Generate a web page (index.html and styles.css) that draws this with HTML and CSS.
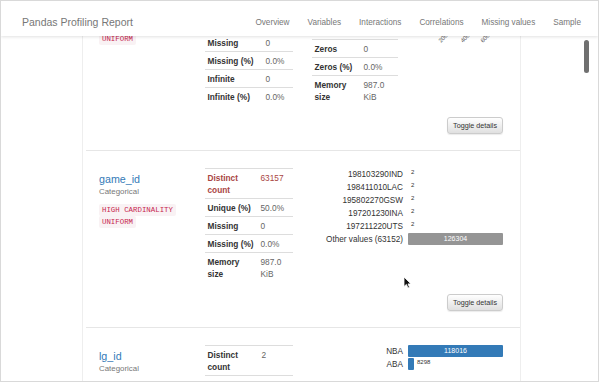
FILE: index.html
```html
<!DOCTYPE html>
<html lang="en">
<head>
    <meta charset="UTF-8">
    <title>Pandas Profiling Report</title>
    <link rel="stylesheet" href="styles.css">
</head>
<body>
<div class="frame">
    <div class="navbar">
        <span class="brand">Pandas Profiling Report</span>
        <ul class="menu">
            <li>Overview</li>
            <li>Variables</li>
            <li>Interactions</li>
            <li>Correlations</li>
            <li>Missing values</li>
            <li>Sample</li>
        </ul>
    </div>

    <div class="page">
        <!-- previous variable, scrolled halfway under the navbar -->
        <div class="var var--partial">
            <div class="var-body">
                <div class="var-name">
                    <div class="tags">
                        <code>UNIFORM</code>
                    </div>
                </div>
                <table class="stats stats--num">
                    <tr><th>Missing</th><td>0</td></tr>
                    <tr><th>Missing (%)</th><td>0.0%</td></tr>
                    <tr><th>Infinite</th><td>0</td></tr>
                    <tr><th>Infinite (%)</th><td>0.0%</td></tr>
                </table>
                <table class="stats stats--ext">
                    <tr><th>Zeros</th><td>0</td></tr>
                    <tr><th>Zeros (%)</th><td>0.0%</td></tr>
                    <tr><th>Memory size</th><td>987.0 KiB</td></tr>
                </table>
                <div class="chart">
                    <svg width="95" height="12" viewBox="0 0 95 12">
                        <g fill="#555" font-family="Liberation Sans, sans-serif" font-size="6">
                            <text transform="translate(33,10) rotate(-45)">200</text>
                            <text transform="translate(55,10) rotate(-45)">400</text>
                            <text transform="translate(75,10) rotate(-45)">600</text>
                        </g>
                    </svg>
                </div>
            </div>
            <div class="var-foot"><button class="btn">Toggle details</button></div>
        </div>

        <div class="var">
            <div class="var-body">
                <div class="var-name">
                    <a class="name">game_id</a>
                    <small class="type">Categorical</small>
                    <div class="tags">
                        <code>HIGH CARDINALITY</code>
                        <code>UNIFORM</code>
                    </div>
                </div>
                <table class="stats stats--cat">
                    <tr class="alert"><th>Distinct count</th><td>63157</td></tr>
                    <tr><th>Unique (%)</th><td>50.0%</td></tr>
                    <tr><th>Missing</th><td>0</td></tr>
                    <tr><th>Missing (%)</th><td>0.0%</td></tr>
                    <tr><th>Memory size</th><td>987.0 KiB</td></tr>
                </table>
                <table class="freq">
                    <tr><td class="label">198103290IND</td><td class="bar-cell"><span class="count">2</span></td></tr>
                    <tr><td class="label">198411010LAC</td><td class="bar-cell"><span class="count">2</span></td></tr>
                    <tr><td class="label">195802270GSW</td><td class="bar-cell"><span class="count">2</span></td></tr>
                    <tr><td class="label">197201230INA</td><td class="bar-cell"><span class="count">2</span></td></tr>
                    <tr><td class="label">197211220UTS</td><td class="bar-cell"><span class="count">2</span></td></tr>
                    <tr><td class="label">Other values (63152)</td><td class="bar-cell"><div class="bar bar--other">126304</div></td></tr>
                </table>
            </div>
            <div class="var-foot"><button class="btn">Toggle details</button></div>
        </div>

        <div class="var">
            <div class="var-body">
                <div class="var-name">
                    <a class="name">lg_id</a>
                    <small class="type">Categorical</small>
                </div>
                <table class="stats stats--lg">
                    <tr><th>Distinct count</th><td>2</td></tr>
                    <tr><th>Unique (%)</th><td>0.0%</td></tr>
                    <tr><th>Missing</th><td>0</td></tr>
                    <tr><th>Missing (%)</th><td>0.0%</td></tr>
                    <tr><th>Memory size</th><td>987.0 KiB</td></tr>
                </table>
                <table class="freq">
                    <tr><td class="label">NBA</td><td class="bar-cell"><div class="bar">118016</div></td></tr>
                    <tr><td class="label">ABA</td><td class="bar-cell"><div class="bar-row"><div class="bar" style="width: 6px"></div><span class="count">8298</span></div></td></tr>
                </table>
            </div>
        </div>
    </div>

    <div class="scroll-thumb"></div>
    <svg class="cursor" width="9" height="13" viewBox="0 0 9 13">
        <path d="M1 1 L1 10.5 L3.4 8.4 L5 12 L6.5 11.3 L5 7.9 L8 7.9 Z" fill="#111" stroke="#fff" stroke-width="0.8"/>
    </svg>
</div>
</body>
</html>
```

FILE: styles.css
```css
*{
    box-sizing: border-box;
    margin: 0;
    padding: 0;
}
body{
    font-family: "Liberation Sans", Arial, sans-serif;
    color: #333;
    background: #fff;
}
.frame{
    position: relative;
    width: 599px;
    height: 382px;
    border: 1px solid #d9d9d9;
    overflow: hidden;
}
.navbar{
    position: absolute;
    top: 0;
    left: 0;
    right: 0;
    height: 35px;
    z-index: 2;
    display: flex;
    align-items: center;
    justify-content: space-between;
    padding: 7px 8px 0 21px;
    background: #fff;
    box-shadow: 0 1px 3px rgba(0,0,0,.12);
}
.brand{
    font-size: 10.5px;
    color: #777;
}
.menu{
    display: flex;
    list-style: none;
}
.menu li{
    padding: 0 9px;
    font-size: 8.2px;
    color: #777;
}
.page{
    margin-left: 81px;
    width: 439px;
    border-left: 1px solid #eee;
    border-right: 1px solid #eee;
}
.var{
    margin-left: 3px;
    border-top: 1px solid #e6e6e6;
    padding: 17px 17px 16px 13px;
}
.var--partial{
    border-top: 0;
    padding-top: 32px;
}
.var-body{
    display: flex;
    align-items: flex-start;
}
.var-name{
    width: 106px;
}
.name{
    display: block;
    margin-top: 5px;
    font-size: 10.7px;
    line-height: 13px;
    color: #337ab7;
}
.type{
    display: block;
    font-size: 7.9px;
    line-height: 12px;
    color: #777;
}
.name ~ .tags{
    margin-top: 6px;
}
code{
    display: table;
    padding: 0 3px;
    font-family: "Liberation Mono", "DejaVu Sans Mono", monospace;
    font-size: 7.4px;
    line-height: 12px;
    color: #c7254e;
    background: #f9f2f4;
    border-radius: 2px;
}
.stats{
    width: 88px;
    border-collapse: collapse;
    table-layout: fixed;
    font-size: 8.3px;
    line-height: 12px;
}
.stats th,
.stats td{
    border-top: 1px solid #ddd;
    padding: 3px 0 2px;
    vertical-align: top;
    text-align: left;
}
.stats th{
    padding-left: 2.5px;
    padding-right: 4px;
    font-weight: bold;
    color: #333;
}
.stats td{
    padding-left: 1.5px;
    color: #666;
}
.stats .alert th,
.stats .alert td{
    color: #a94442;
}
.stats--num th{ width: 59px; }
.stats--cat th{ width: 54px; }
.stats--lg th{ width: 55px; }
.stats--ext{
    width: 86px;
    margin: 6px 0 0 19px;
}
.stats--ext th{ width: 50px; }
.chart{
    width: 95px;
    margin-left: 10px;
}
.chart svg{
    display: block;
    overflow: visible;
}
.freq{
    margin-left: auto;
    border-collapse: collapse;
    font-size: 8.2px;
}
.freq td{
    height: 13px;
    line-height: 13px;
    padding: 0;
    vertical-align: top;
}
.freq .label{
    text-align: right;
    white-space: nowrap;
    padding-right: 5px;
    color: #333;
}
.freq .bar-cell{
    width: 95px;
}
.count{
    display: inline-block;
    padding-left: 3px;
    font-size: 6px;
    line-height: 9px;
    vertical-align: top;
    color: #333;
}
.bar{
    height: 12px;
    line-height: 12px;
    background: #337ab7;
    color: #fff;
    font-size: 7px;
    text-align: center;
    border-radius: 1px;
}
.bar--other{
    background: #959595;
}
.bar-row{
    display: flex;
    align-items: flex-start;
}
.var-foot{
    display: flex;
    justify-content: flex-end;
    margin-top: 12px;
}
.btn{
    height: 17px;
    padding: 0 5px;
    font-family: "Liberation Sans", Arial, sans-serif;
    font-size: 7.2px;
    color: #333;
    border: 1px solid #ccc;
    border-radius: 3px;
    background: linear-gradient(#fff, #e0e0e0);
    box-shadow: 0 1px 1px rgba(0,0,0,.08);
}
.scroll-thumb{
    position: absolute;
    left: 583px;
    top: 39px;
    width: 5px;
    height: 33px;
    border-radius: 3px;
    background: #707070;
    z-index: 3;
}
.cursor{
    position: absolute;
    left: 402px;
    top: 275px;
    z-index: 3;
}
```
